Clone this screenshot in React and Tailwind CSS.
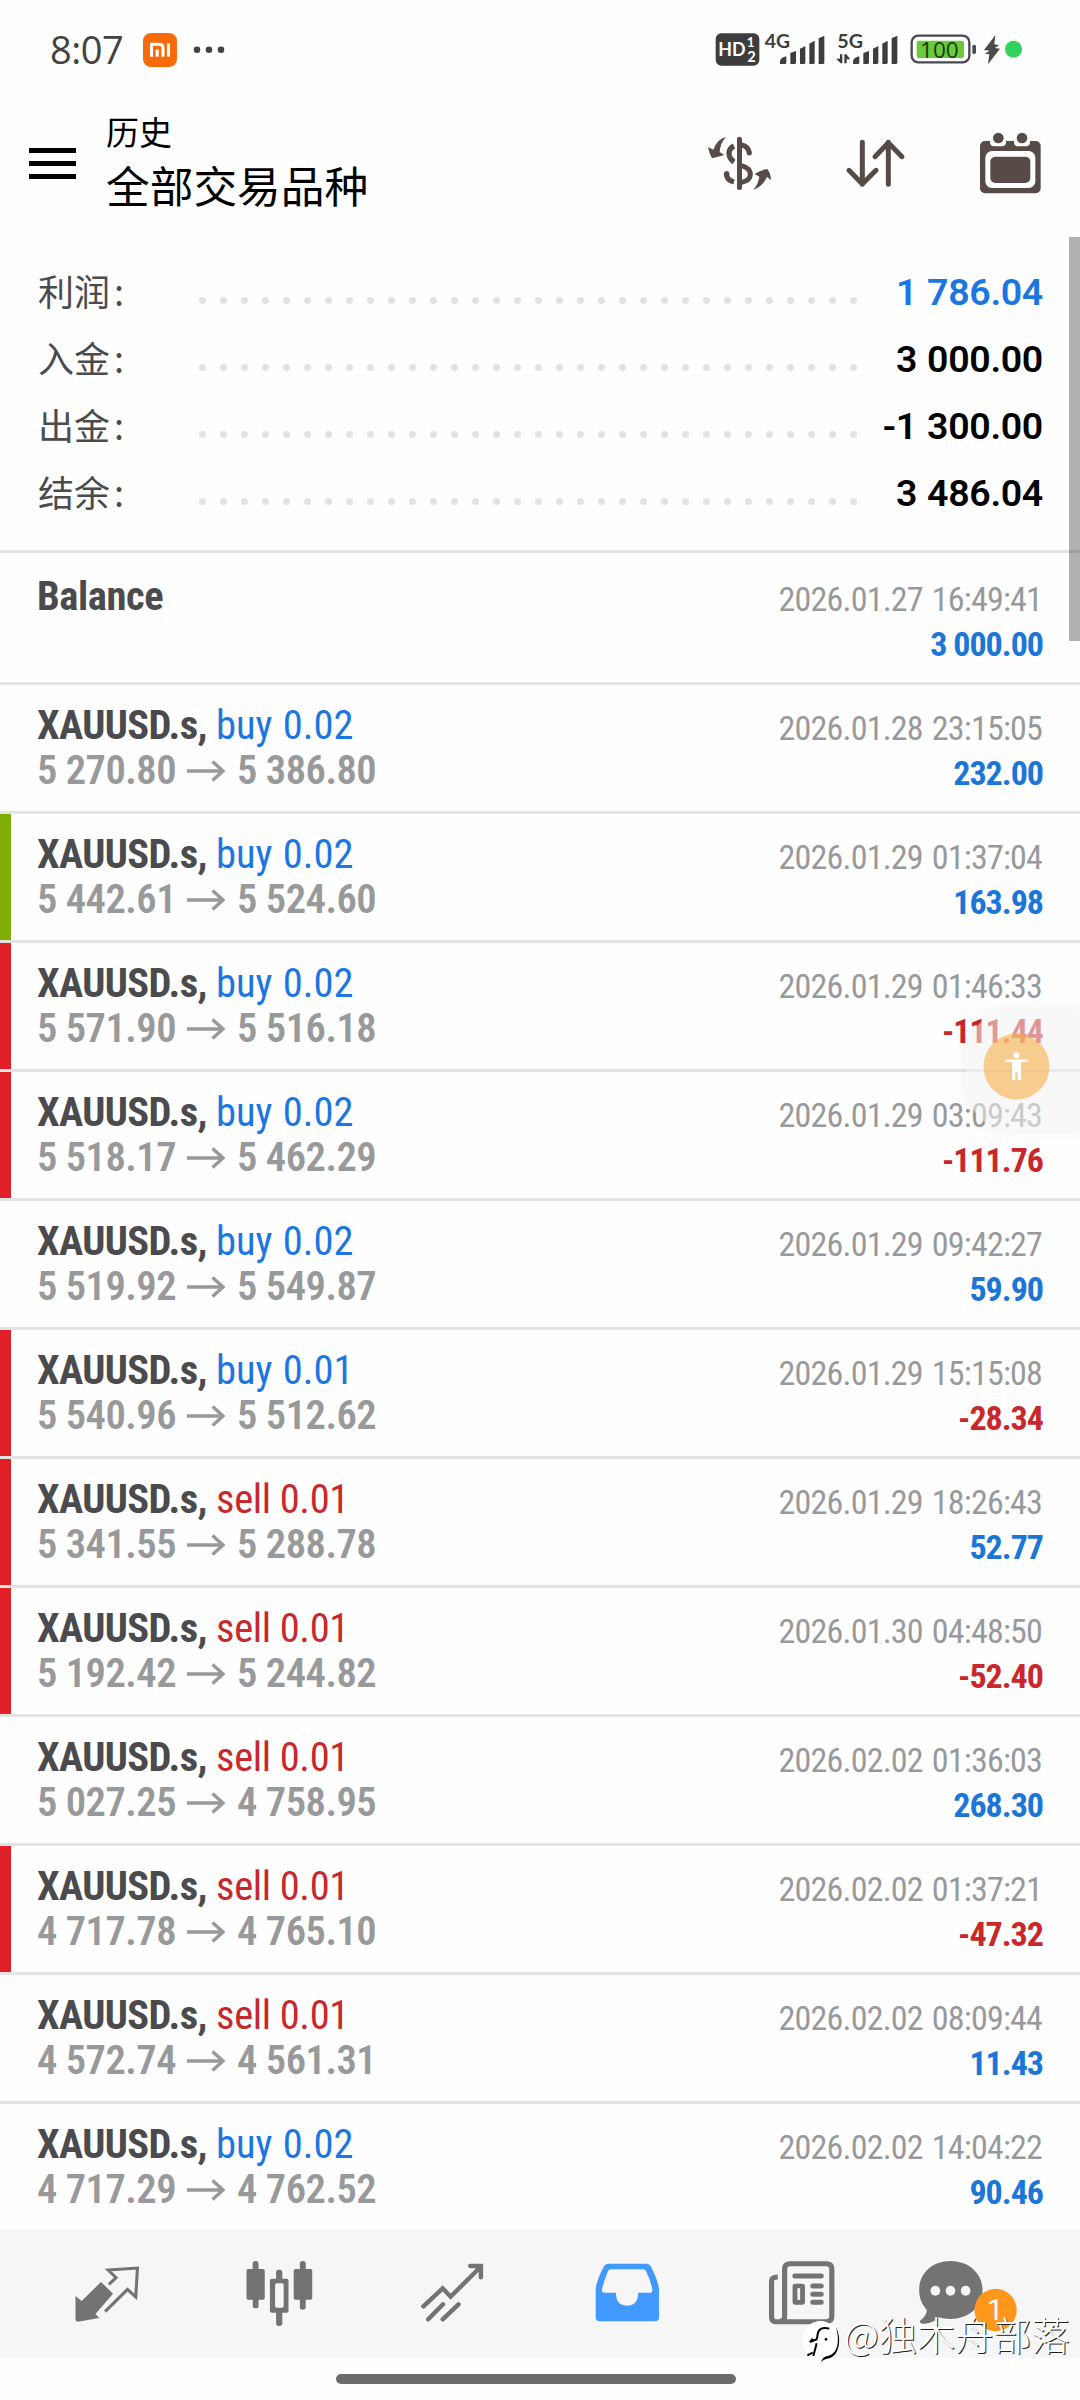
import React from "react";

const summary = [
  { label: "利润", value: "1 786.04", blue: true },
  { label: "入金", value: "3 000.00" },
  { label: "出金", value: "-1 300.00" },
  { label: "结余", value: "3 486.04" },
];

const trades = [
  { type: "buy", lot: "0.02", open: "5 270.80", close: "5 386.80", time: "2026.01.28 23:15:05", profit: "232.00" },
  { type: "buy", lot: "0.02", open: "5 442.61", close: "5 524.60", time: "2026.01.29 01:37:04", profit: "163.98", mark: "tp" },
  { type: "buy", lot: "0.02", open: "5 571.90", close: "5 516.18", time: "2026.01.29 01:46:33", profit: "-111.44", mark: "sl" },
  { type: "buy", lot: "0.02", open: "5 518.17", close: "5 462.29", time: "2026.01.29 03:09:43", profit: "-111.76", mark: "sl" },
  { type: "buy", lot: "0.02", open: "5 519.92", close: "5 549.87", time: "2026.01.29 09:42:27", profit: "59.90" },
  { type: "buy", lot: "0.01", open: "5 540.96", close: "5 512.62", time: "2026.01.29 15:15:08", profit: "-28.34", mark: "sl" },
  { type: "sell", lot: "0.01", open: "5 341.55", close: "5 288.78", time: "2026.01.29 18:26:43", profit: "52.77", mark: "sl" },
  { type: "sell", lot: "0.01", open: "5 192.42", close: "5 244.82", time: "2026.01.30 04:48:50", profit: "-52.40", mark: "sl" },
  { type: "sell", lot: "0.01", open: "5 027.25", close: "4 758.95", time: "2026.02.02 01:36:03", profit: "268.30" },
  { type: "sell", lot: "0.01", open: "4 717.78", close: "4 765.10", time: "2026.02.02 01:37:21", profit: "-47.32", mark: "sl" },
  { type: "sell", lot: "0.01", open: "4 572.74", close: "4 561.31", time: "2026.02.02 08:09:44", profit: "11.43" },
  { type: "buy", lot: "0.02", open: "4 717.29", close: "4 762.52", time: "2026.02.02 14:04:22", profit: "90.46" },
];

function StatusBar() {
  return (
    <div className="flex h-[100px] items-start pl-[50px] pr-[58px] pt-8 text-[#424242]">
      <div className="-mt-[2px] h-9 w-[93px] font-['Open_Sans'] text-[38px] leading-[39px] font-medium tracking-[-0.5px]">8:07</div>
      <svg className="mt-px h-[34px] w-[34px]" viewBox="0 0 34 35" preserveAspectRatio="none">
        <rect width="34" height="35" rx="8" fill="#fb6a08" />
        <path d="M8.500 24.500V11.500h7.500q4 0 4 4v9M14.200 24.500v-7.500M25.500 10.500v14" fill="none" stroke="#fff" strokeWidth="3" />
      </svg>
      <svg className="-mt-[2px] ml-4 h-[39px] w-[32px]" viewBox="0 0 32 39" fill="#424242">
        <circle cx="4" cy="19.700" r="3.300" />
        <circle cx="16" cy="19.700" r="3.300" />
        <circle cx="28" cy="19.700" r="3.300" />
      </svg>
      <div className="ml-auto flex">
        <svg className="h-9 w-[45px] overflow-visible" viewBox="165 96 135 108">
          <rect x="167" y="100" width="131" height="97" rx="17" fill="#3d3d3d" />
          <text x="175" y="169" fontFamily="Lato" fontWeight="700" fontSize="58" fill="#fff" textLength="82" lengthAdjust="spacingAndGlyphs">HD</text>
          <text x="260" y="141" fontFamily="Lato" fontWeight="700" fontSize="40" fill="#fff">1</text>
          <text x="262" y="186" fontFamily="Lato" fontWeight="700" fontSize="44" fill="#fff">2</text>
        </svg>
        <svg className="ml-1 h-9 w-[61px] overflow-visible" viewBox="312 96 183 108" fill="#3d3d3d">
          <text x="314" y="144" fontFamily="Lato" fontWeight="700" fontSize="59" textLength="76" lengthAdjust="spacingAndGlyphs">4G</text>
          <Bars x={360} />
        </svg>
        <svg className="ml-[10px] h-9 w-[63px] overflow-visible" viewBox="525 96 189 108" fill="#3d3d3d">
          <text x="532" y="144" fontFamily="Lato" fontWeight="700" fontSize="59" textLength="77" lengthAdjust="spacingAndGlyphs">5G</text>
          <path d="M540 163h7v27h-5l-14-14h12zM553 190v-27h6l12 15h-11v12z" />
          <Bars x={579} />
        </svg>
        <svg className="ml-3 h-9 w-[67px]" viewBox="750 96 201 108">
          <rect x="755" y="107" width="173" height="80" rx="20" fill="#fff" stroke="#494951" strokeWidth="7" />
          <rect x="770" y="122" width="142" height="52" rx="6" fill="#6cc93a" />
          <rect x="937" y="134" width="11" height="28" rx="5" fill="#494951" />
          <text x="780" y="173" fontFamily="Open Sans" fontSize="66" fill="#123d08" textLength="116" lengthAdjust="spacingAndGlyphs">100</text>
        </svg>
        <svg className="ml-[6px] h-9 w-[17px]" viewBox="969 96 51 108">
          <path d="M1006 106l-34 44 17 2-15 9 14 2-4 30 36-47-16-2 14-8-15-3z" fill="#4a4a4a" />
        </svg>
        <svg className="ml-[5px] h-9 w-[17px]" viewBox="1035 96 51 108">
          <circle cx="1060.500" cy="148" r="25.500" fill="#30d45c" />
        </svg>
      </div>
    </div>
  );
}

function Bars({ x }) {
  return (
    <g transform={`translate(${x} 0)`}>
      <path d="M0 192v-8q2-12 19-15v20l-3 3zM31 192v-33l17-6v36l-3 3zM60 192v-46l16-8v51l-3 3zM88 192v-61l16-9v67l-3 3zM116 192v-77l17-8v82l-3 3z" />
    </g>
  );
}

function Header() {
  return (
    <div className="flex h-[137px] pl-[29px] pr-[38px]">
      <div className="mt-12 flex w-[47px] flex-col gap-2">
        <div className="h-[5px] bg-black" />
        <div className="h-[5px] bg-black" />
        <div className="h-[5px] bg-black" />
      </div>
      <div className="ml-[30px] font-['Noto_Sans_CJK_SC',sans-serif] text-black">
        <div className="mt-2 text-[33px] leading-[46px]">历史</div>
        <div className="text-[43.700px] leading-[61px]">全部交易品种</div>
      </div>
      <div className="ml-auto flex h-[126px] items-center">
        <svg className="h-[57px] w-[66px]" viewBox="141 405 198 171" fill="#574b48">
          <path d="M198 411q-26 5-38 38l-16-8q3 18 12 34 18-5 37-10l-14-9q2-28 19-45zM279 570q28-9 42-39l12 9q0-18-11-33-20 3-38 15l14 8q-4 25-19 40z" />
          <rect x="231" y="410" width="15" height="160" rx="7.500" />
          <path d="M222 438q-15 7-15 22 0 16 15 26M199 522q2 19 23 24" fill="none" stroke="#574b48" strokeWidth="16" />
          <circle cx="200" cy="521" r="8" />
          <path d="M245 435q20 4 23 24M245 497q26 8 26 26 0 19-26 24" fill="none" stroke="#574b48" strokeWidth="15" />
          <circle cx="268" cy="459" r="7.500" />
        </svg>
        <svg className="ml-[72px] h-[52px] w-[61px]" viewBox="555 411 183 156" fill="none" stroke="#574b48" strokeWidth="15" strokeLinecap="round" strokeLinejoin="round">
          <path d="M607 427v126M567 511l40 41 41-41M685 553V427M645 470l40-42 41 42" />
        </svg>
        <svg className="ml-[73px] h-16 w-[63px]" viewBox="957 390 189 192" fill="#574b48">
          <rect x="960" y="420" width="182" height="157" rx="15" />
          <path d="M990 410v14q0 12 13 12h22q13 0 13-12v-14zM1062 410v14q0 12 13 12h22q13 0 13-12v-14z" fill="#fff" />
          <circle cx="1015" cy="411" r="16" />
          <circle cx="1086" cy="411" r="16" />
          <rect x="976" y="450" width="150" height="111" rx="20" fill="#fff" />
          <rect x="991" y="467" width="120" height="79" rx="15" />
        </svg>
      </div>
    </div>
  );
}

function Summary() {
  return (
    <div className="h-[313px] pt-[22px] pl-[38px] pr-[37px]">
      {summary.map((s) => (
        <div key={s.label} className="flex h-[67px] items-center">
          <div className="-mt-[5px] w-[161px] font-['Noto_Sans_CJK_SC',sans-serif] text-[36px] leading-[67px] text-[#4b4b4d]">
            {s.label}<span className="ml-1">:</span>
          </div>
          <div className="mt-[15px] flex gap-[14px]">
            {Array.from({ length: 32 }, (_, i) => (
              <span key={i} className="size-[7px] rounded-full bg-[#e2e2e4]" />
            ))}
          </div>
          <div className={`ml-auto font-[Roboto] text-[37.500px] font-semibold leading-[67px] tracking-[-0.300px] [word-spacing:1px] ${s.blue ? "text-[#1b76e2]" : "text-black"}`}>
            {s.value}
          </div>
        </div>
      ))}
    </div>
  );
}

function Result({ time, value }) {
  return (
    <div className="ml-auto flex flex-col items-end pt-[3px] text-[34px] leading-[45px]">
      <div className="mr-px tracking-[-0.800px] text-[#98999b] [word-spacing:2px]">{time}</div>
      <div className={`font-bold tracking-[-1px] ${value.startsWith("-") ? "text-[#c9272c]" : "text-[#1b76d8]"}`}>{value}</div>
    </div>
  );
}

function Arrow() {
  return (
    <svg className="mr-3 ml-[11px] h-[45px] w-[38px]" viewBox="0 0 38 45" fill="none" stroke="#98999b" strokeWidth="3.500">
      <path d="M0 23h36M25.500 13.500L36 23 25.500 32.500" />
    </svg>
  );
}

function TradeRow({ t }) {
  return (
    <div className="relative flex h-[129px] border-t-[3px] border-[#e3e3e4] pl-[37px] pr-[37px] pt-[18px]">
      {t.mark && (
        <div className={`absolute top-0 left-0 h-[126px] w-[11px] ${t.mark === "tp" ? "bg-[#7fae06]" : "bg-[#e01f26]"}`} />
      )}
      <div className="text-[40.500px] leading-[45px]">
        <div>
          <span className="font-bold tracking-[-0.600px] text-[#4b4b4d]">XAUUSD.s,</span>{" "}
          <span className={t.type === "buy" ? "text-[#1b76e2] [word-spacing:1px]" : "text-[#c9272c] tracking-[-0.350px]"}>{t.type} {t.lot}</span>
        </div>
        <div className="flex font-semibold tracking-[-0.500px] text-[#98999b]">
          {t.open}
          <Arrow />
          {t.close}
        </div>
      </div>
      <Result time={t.time} value={t.profit} />
    </div>
  );
}

function NavIcon({ viewBox, children }) {
  return (
    <div className="flex w-[173.200px] justify-center">
      <svg className="size-[90px] overflow-visible" viewBox={viewBox} preserveAspectRatio="none" fill="#737373">
        {children}
      </svg>
    </div>
  );
}

function BottomNav() {
  return (
    <div className="relative flex h-[129px] items-center justify-center bg-[#f6f6f6]">
      <NavIcon viewBox="181.8 85 261.4 270">
        <path d="M295 184l35 35-51 61 11 12-62 11q-7 0-7-7v-70l18 15z" />
        <path d="M318 191l21-20-23-23 85-6-5 87-24-23-65 67" fill="none" stroke="#737373" strokeWidth="9" />
      </NavIcon>
      <NavIcon viewBox="684.6 85 261.4 270">
        <rect x="718" y="145" width="53" height="92" rx="5" />
        <rect x="736" y="121" width="17" height="142" rx="8" />
        <rect x="855" y="145" width="54" height="92" rx="5" />
        <rect x="873" y="121" width="17" height="146" rx="8" />
        <rect x="804" y="147" width="18" height="169" rx="8" />
        <rect x="786" y="174" width="54" height="102" rx="5" />
        <rect x="801" y="188" width="25" height="73" rx="5" fill="#f6f6f6" />
      </NavIcon>
      <NavIcon viewBox="1187.3 85 261.4 270">
        <path d="M1232 257l56-54 23 25 83-85M1368 136h31v34M1289 251l-43 45M1334 251l-46 45" fill="none" stroke="#737373" strokeWidth="13" strokeLinecap="round" />
        <path d="M1378 136h21v24z" />
      </NavIcon>
      <NavIcon viewBox="122.2 85 261.4 270">
        <path d="M198 129h112q8 0 12 8 24 50 24 72v81q0 12-12 12H174q-12 0-12-12v-81q0-25 24-72 4-8 12-8z" fill="#4199fd" />
        <path d="M206 146h92q8 0 11 7 14 30 18 55 0 8-6 8h-36v8q-2 31-32 31t-32-31v-8h-34q-8 0-7-8 4-24 17-55 2-7 9-7z" fill="#f6f6f6" />
      </NavIcon>
      <NavIcon viewBox="624.9 85 261.4 270">
        <path d="M691 169q-18 0-18 12v108q0 14 12 14h147q16 0 16-16V145q0-16-16-16H727q-16 0-16 16v142q0 15-14 15" fill="none" stroke="#737373" strokeWidth="15" />
        <path d="M741 166h76M793 196h24M793 221h24M793 245h24" stroke="#737373" strokeWidth="15" strokeLinecap="round" />
        <rect x="741" y="196" width="22" height="49" fill="none" stroke="#737373" strokeWidth="14" strokeLinejoin="round" />
      </NavIcon>
      <NavIcon viewBox="1127.7 85 261.4 270">
        <path d="M1193 121c52 0 93 36 93 87s-41 87-93 87c-12 0-24-2-34-5-8 12-30 21-48 19q-10-2-6-9c10-9 19-19 19-33-14-15-22-35-22-59 0-51 39-87 91-87z" />
        <ellipse cx="1149" cy="210" rx="14" ry="15" fill="#f6f6f6" />
        <ellipse cx="1193" cy="210" rx="14" ry="15" fill="#f6f6f6" />
        <ellipse cx="1237" cy="210" rx="14" ry="15" fill="#f6f6f6" />
        <ellipse cx="1324" cy="268" rx="61.500" ry="63.500" fill="#fe971c" />
        <text x="1323" y="299" textAnchor="middle" fontFamily="Roboto" fontSize="87" fill="#fff">1</text>
      </NavIcon>
      {/* watermark */}
      <div className="absolute top-[89px] left-[800px] flex items-start">
        <svg className="h-[46px] w-[42px]" viewBox="0 114 126 138">
          <ellipse cx="61" cy="180" rx="55" ry="57" fill="#fff" />
          <path d="M88 146c-20-6-32 0-35 16l-2 14M30 186l22-9M38 176l-8 11M50 190L40 228M22 226l16-8" fill="none" stroke="#000" strokeWidth="6" />
          <path d="M108 143c17 30 12 82-21 92q-18 3-24 12 3-17 22-20c31-7 34-50 23-84z" />
          <circle cx="78" cy="178" r="4" />
        </svg>
        <div className="-mt-[9px] ml-[2px] font-['Noto_Sans_CJK_SC',sans-serif] text-[38.200px] leading-[50px] font-light whitespace-nowrap text-white [text-shadow:1px_1px_0.500px_#222]">@独木舟部落</div>
      </div>
    </div>
  );
}

function FloatButton() {
  return (
    <div className="absolute top-[1010px] right-0 h-[121px] w-[114px] rounded-l-[46px] bg-[#f3f3f3]/55 shadow-[0_0_14px_rgba(0,0,0,0.06)]">
      <svg className="mt-[23px] ml-[17px] size-[67px]" viewBox="0 0 68 68">
        <circle cx="34" cy="34" r="33.500" fill="#f7ac44" fillOpacity="0.58" />
        <circle cx="34" cy="22.500" r="3" fill="#fff" />
        <path d="M22.500 27h23v2.500h-7V48h-3.200v-8h-2.500v8h-3.200V29.500h-7.100z" fill="#fff" />
      </svg>
    </div>
  );
}

export default function App() {
  return (
    <div className="relative h-[2400px] w-[1080px] overflow-hidden bg-[#fefefe]">
      <StatusBar />
      <Header />
      <Summary />
      <div className="h-[1679px] overflow-hidden font-[Roboto] font-stretch-condensed">
        <div className="flex h-[132px] border-t-[3px] border-[#e3e3e4] pl-[37px] pr-[37px] pt-[21px]">
          <div className="text-[40.500px] leading-[45px] font-bold tracking-[-0.400px] text-[#4b4b4d]">Balance</div>
          <Result time="2026.01.27 16:49:41" value="3 000.00" />
        </div>
        {trades.map((t) => (
          <TradeRow key={t.time} t={t} />
        ))}
      </div>
      <BottomNav />
      <div className="mx-auto mt-4 h-[10px] w-[400px] -translate-x-1 rounded-full bg-[#6b6b6b]" />
      <div className="absolute top-[237px] right-0 h-[404px] w-[11px] bg-black/30" />
      <FloatButton />
    </div>
  );
}
